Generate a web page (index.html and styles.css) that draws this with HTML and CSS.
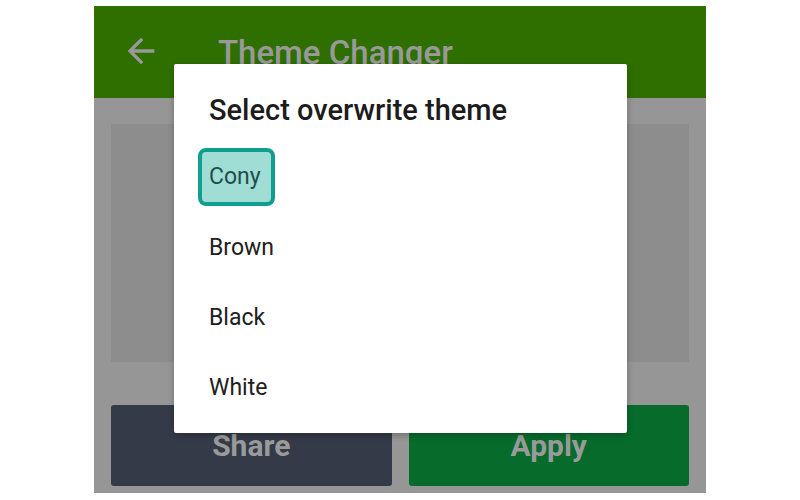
FILE: index.html
```html
<!DOCTYPE html>
<html>
<head>
<meta charset="utf-8">
<link rel="stylesheet" href="styles.css">
</head>
<body>
<div class="phone">
  <header class="appbar">
    <svg class="back" viewBox="0 0 24 24" width="40" height="40"><path d="M20 11H7.83l5.59-5.59L12 4l-8 8 8 8 1.41-1.41L7.83 13H20v-2z" fill="#999999"/></svg>
    <span class="title">Theme Changer</span>
  </header>
  <main class="content">
    <div class="preview"></div>
    <div class="actions">
      <div class="btn share">Share</div>
      <div class="btn apply">Apply</div>
    </div>
  </main>
  <div class="dialog">
    <div class="dialog-title">Select overwrite theme</div>
    <div class="item focused"><span class="label">Cony</span></div>
    <div class="item"><span class="label">Brown</span></div>
    <div class="item"><span class="label">Black</span></div>
    <div class="item"><span class="label">White</span></div>
  </div>
</div>
</body>
</html>
```

FILE: styles.css
```css
html, body {
  margin: 0;
  padding: 0;
  background: #ffffff;
}
body {
  padding-top: 6px;
  font-family: Roboto, "Liberation Sans", sans-serif;
}
.phone {
  position: relative;
  margin-left: 94px;
  width: 612px;
  height: 487px;
  display: flex;
  flex-direction: column;
}
.appbar {
  height: 92px;
  background: #2e6f00;
  display: flex;
  align-items: center;
  flex-shrink: 0;
}
.back {
  margin-left: 27px;
  margin-top: -2px;
}
.title {
  margin-left: 57px;
  margin-top: 0;
  font-size: 33px;
  font-weight: 500;
  color: #999999;
}
.content {
  flex: 1;
  background: #969696;
  padding: 26px 17px 7px 17px;
  display: flex;
  flex-direction: column;
}
.preview {
  height: 238px;
  background: #8d8d8d;
}
.actions {
  margin-top: 43px;
  display: flex;
  gap: 17px;
  flex: 1;
}
.btn {
  flex: 1;
  border-radius: 3px;
  display: flex;
  align-items: center;
  justify-content: center;
  font-size: 30px;
  font-weight: 700;
  color: #9a9a9a;
}
.share { background: #343a48; }
.apply { background: #066b2b; }
.dialog {
  position: absolute;
  left: 80px;
  top: 58px;
  width: 453px;
  height: 369px;
  background: #ffffff;
  border-radius: 2px;
  box-shadow: 0 2px 6px rgba(0,0,0,0.25);
  box-sizing: border-box;
  padding-top: 30px;
}
.dialog-title {
  padding-left: 35px;
  font-size: 29px;
  line-height: 32px;
  font-weight: 500;
  color: #1c1c1c;
  margin-bottom: 16px;
}
.item {
  height: 70px;
  display: flex;
  align-items: center;
  padding-left: 35px;
  font-size: 23px;
  color: #202020;
}
.item.focused .label {
  margin-left: -11px;
  padding: 0 10px 0 7px;
  border: 4px solid #0f9e8f;
  border-radius: 8px;
  background: #a0ddd5;
  line-height: 50px;
  color: #1f4f4a;
}
```
